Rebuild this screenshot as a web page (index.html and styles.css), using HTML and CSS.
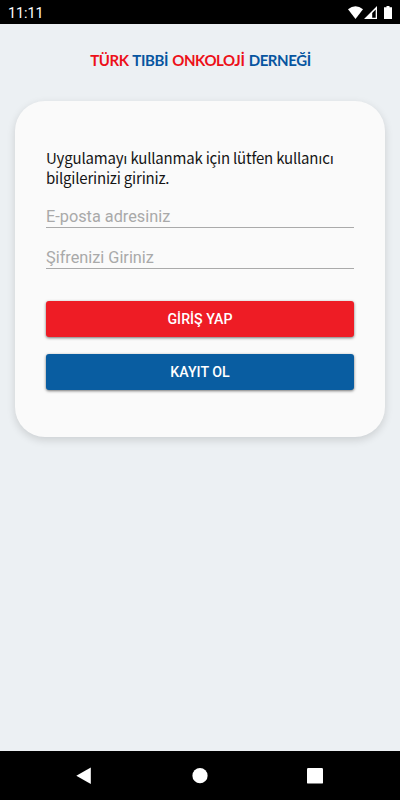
FILE: index.html
```html
<!DOCTYPE html>
<html lang="tr">
<head>
<meta charset="utf-8">
<title>Türk Tıbbi Onkoloji Derneği</title>
<link rel="stylesheet" href="styles.css">
</head>
<body>
<div class="status">
  <span class="clock">11:11</span>
  <svg class="status-icons" width="46" height="14" viewBox="0 0 46 14" fill="#fff">
    <path d="M0 3.2Q7.5-2.6 15 3.2L7.5 13Z"/>
    <path fill-rule="evenodd" d="M29 0V13H16ZM27.7 3.5L24.2 7V11.7H27.7Z"/>
    <path d="M38.5 0h3v1.3h2.5V13h-8V1.3h2.5z"/>
  </svg>
</div>
<main class="page">
  <h1 class="brand"><span class="red">TÜRK</span> <span class="blue">TIBBİ</span> <span class="red">ONKOLOJİ</span> <span class="blue">DERNEĞİ</span></h1>
  <form class="card">
    <p class="intro">Uygulamayı kullanmak için lütfen kullanıcı bilgilerinizi giriniz.</p>
    <input class="field" type="text" placeholder="E-posta adresiniz">
    <input class="field" type="password" placeholder="Şifrenizi Giriniz">
    <button class="button login" type="button">GİRİŞ YAP</button>
    <button class="button register" type="button">KAYIT OL</button>
  </form>
</main>
<nav class="nav">
  <svg width="16" height="18" viewBox="0 0 16 18" fill="#fff"><path d="M.3 8.7L14.8.5V17Z"/></svg>
  <svg width="16" height="18" viewBox="0 0 16 18" fill="#fff"><circle cx="8" cy="8.7" r="7.6"/></svg>
  <svg width="16" height="18" viewBox="0 0 16 18" fill="#fff"><rect y="1" width="16" height="15.6" rx="1.2"/></svg>
</nav>
</body>
</html>
```
FILE: styles.css
```css
* { box-sizing: border-box; }
body {
  margin: 0;
  height: 800px;
  display: flex;
  flex-direction: column;
  overflow: hidden;
  background: #ecf0f3;
  font-family: Roboto, sans-serif;
}
.status {
  height: 24px;
  display: flex;
  justify-content: space-between;
  align-items: center;
  padding: 2px 2px 0 8px;
  background: #000;
  color: #fff;
}
.clock { font-size: 14.3px; line-height: 22px; }
.status-icons { margin-right: 4px; }
.page { flex: 1; }
.brand {
  margin: 26px 0 0;
  padding-left: 1px;
  height: 20px;
  line-height: 20px;
  text-align: center;
  white-space: nowrap;
  font-family: Lato, sans-serif;
  font-size: 15px;
  font-weight: 700;
  letter-spacing: -.4px;
  word-spacing: .9px;
}
.red { color: #ed1019; }
.blue { color: #0755a0; }
.card {
  margin: 31px 15px 0;
  height: 336px;
  padding: 47px 31px 0;
  border-radius: 30px;
  background: #fafafa;
  box-shadow: 0 3px 8px rgba(0, 0, 0, .14);
}
.intro {
  margin: 0 -5px 11px 0;
  font: 400 15px/20px "Noto Sans CJK SC", sans-serif;
  letter-spacing: -.2px;
  color: #151515;
}
.field {
  display: block;
  width: 100%;
  height: 29px;
  margin: 0 0 12px;
  padding: 6px 0 0;
  border: 0;
  border-bottom: 1px solid #aaa;
  background: none;
  font: 400 16.3px/20px Roboto, sans-serif;
}
.field::placeholder { color: #a9a9a9; opacity: 1; }
.button {
  display: block;
  width: 100%;
  height: 36px;
  padding: 0;
  border: 0;
  border-radius: 3px;
  color: #fff;
  font: 500 14.2px/36px Roboto, sans-serif;
  box-shadow: 0 1px 3px rgba(0, 0, 0, .55);
}
.login { margin-top: 32px; background: #ee1c25; }
.register { margin-top: 17px; background: #095da1; }
.nav {
  height: 49px;
  display: flex;
  justify-content: space-between;
  padding: 16px 77px 0 76px;
  background: #000;
}
```
